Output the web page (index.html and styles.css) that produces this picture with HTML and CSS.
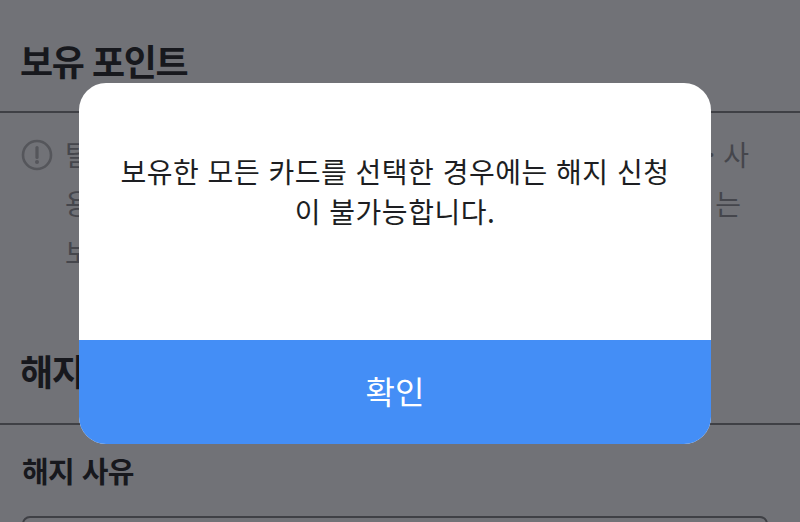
FILE: index.html
```html
<!DOCTYPE html>
<html lang="ko">
<head>
    <meta charset="UTF-8">
    <title>해지 신청</title>
    <link rel="stylesheet" href="styles.css">
</head>
<body>
<div class="page">
    <div class="head head-first"><h2>보유 포인트</h2></div>
    <div class="notice">
        <svg class="notice-icon" viewBox="0 0 32 32" width="32" height="32">
            <circle cx="16" cy="16" r="14" fill="none" stroke="#55565b" stroke-width="2.6"/>
            <path d="M16 8.5v10" fill="none" stroke="#55565b" stroke-width="3.2" stroke-linecap="round"/>
            <circle cx="16" cy="23" r="2" fill="#55565b"/>
        </svg>
        <div class="notice-text">
            <p class="line"><span>탈</span><span>· 사</span></p>
            <p class="line line-short"><span>용</span><span>는</span></p>
            <p class="line"><span>보</span></p>
        </div>
    </div>
    <div class="head head-second"><h2>해지 카드</h2></div>
    <h3>해지 사유</h3>
    <div class="select-box"></div>
</div>

<div class="modal">
    <div class="modal-body">보유한 모든 카드를 선택한 경우에는 해지 신청<br>이 불가능합니다.</div>
    <button class="modal-btn">확인</button>
</div>
</body>
</html>
```

FILE: styles.css
```css
html,body,div,h2,h3,p {
    margin: 0;
    padding: 0;
}

body {
    width: 800px;
    height: 522px;
    overflow: hidden;
    background: #717277;
    font-family: "Noto Sans CJK KR", "Noto Sans", sans-serif;
    color: #17181d;
}

.page {
    height: 522px;
    overflow: hidden;
}

.head {
    padding-left: 20px;
    border-bottom: 2px solid #3f4045;
}

.head-first {
    height: 75px;
    padding-top: 36px;
}

.head-second {
    height: 77px;
}

h2 {
    font-size: 36px;
    line-height: 48px;
    font-weight: 700;
    letter-spacing: -1.4px;
}

h3 {
    margin: 23px 0 0 22px;
    font-size: 29px;
    line-height: 44px;
    font-weight: 700;
    letter-spacing: -0.6px;
}

.notice {
    display: flex;
    height: 233px;
    padding: 17px 0 0 21px;
    box-sizing: border-box;
    gap: 12px;
}

.notice-icon {
    flex: none;
    margin-top: 9px;
}

.notice-text {
    width: 684px;
    color: #45464c;
    font-size: 28px;
    line-height: 49px;
}

.line {
    display: flex;
    justify-content: space-between;
    white-space: nowrap;
}

.line-short {
    padding-right: 8px;
}

.select-box {
    margin: 24px 32px 0 22px;
    height: 60px;
    border: 2px solid #3f4045;
    border-radius: 8px;
}

.modal {
    position: absolute;
    left: 79px;
    top: 83px;
    width: 632px;
    height: 361px;
    display: flex;
    flex-direction: column;
    background: #fff;
    border-radius: 27px;
    overflow: hidden;
}

.modal-body {
    flex: 1;
    padding: 68px 0 0;
    font-size: 28px;
    line-height: 40px;
    letter-spacing: 0.5px;
    text-align: center;
    color: #1d1e22;
}

.modal-btn {
    flex: none;
    height: 104px;
    border: 0;
    padding: 0 0 4px;
    background: #448ef6;
    color: #fff;
    font-family: inherit;
    font-size: 32px;
}
```
